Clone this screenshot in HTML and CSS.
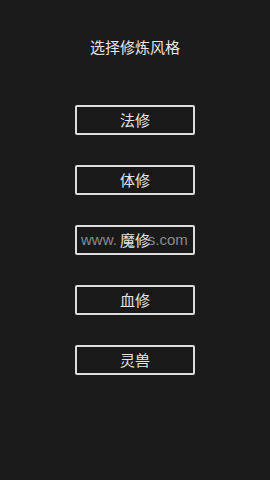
FILE: index.html
```html
<!DOCTYPE html>
<html lang="zh">
<head>
    <meta charset="UTF-8">
    <meta name="viewport" content="width=device-width, initial-scale=1.0">
    <title>选择修炼风格</title>
    <link rel="stylesheet" href="styles.css">
</head>
<body>
    <div class="screen">
        <h1 class="title">选择修炼风格</h1>
        <div class="style-list">
            <button class="style-btn">法修</button>
            <button class="style-btn">体修</button>
            <button class="style-btn watermarked">
                <span class="watermark">www.<span class="gap"></span>s.com</span>
                <span class="label">魔修</span>
            </button>
            <button class="style-btn">血修</button>
            <button class="style-btn">灵兽</button>
        </div>
    </div>
</body>
</html>
```

FILE: styles.css
```css
body {
    margin: 0;
    padding: 0;
    background-color: #1b1b1b;
    font-family: "Noto Sans CJK SC", "Noto Sans", sans-serif;
    color: #e6e6e6;
}

.screen {
    display: flex;
    flex-direction: column;
    align-items: center;
    width: 270px;
    height: 480px;
    box-sizing: border-box;
    padding-top: 37px;
}

.title {
    margin: 0;
    font-size: 15px;
    font-weight: normal;
    line-height: 20px;
    color: #e8e8e8;
}

.style-list {
    display: flex;
    flex-direction: column;
    gap: 30px;
    margin-top: 48px;
}

.style-btn {
    position: relative;
    width: 120px;
    height: 30px;
    box-sizing: border-box;
    border: 2px solid #dcdcdc;
    border-radius: 2px;
    background-color: #191919;
    color: #e6e6e6;
    font-family: "Noto Sans CJK SC", sans-serif;
    font-size: 15px;
    line-height: 26px;
    padding: 0;
    cursor: pointer;
}

.watermark {
    position: absolute;
    left: 4px;
    top: 0;
    font-family: "Liberation Sans", Arial, sans-serif;
    font-size: 15px;
    color: #8a8a8a;
    white-space: nowrap;
}

.watermark .gap {
    display: inline-block;
    width: 31px;
}

.label {
    position: relative;
}
```
